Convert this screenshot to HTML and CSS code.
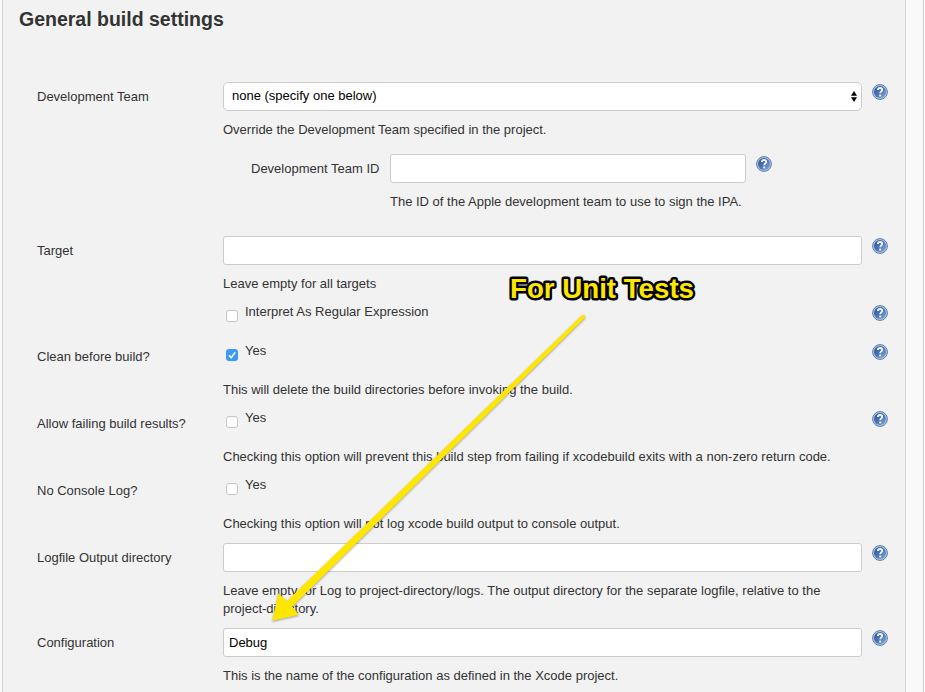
FILE: index.html
```html
<!DOCTYPE html>
<html lang="en">
<head>
<meta charset="utf-8">
<title>General build settings</title>
<link rel="stylesheet" href="styles.css">
</head>
<body>
<svg class="defs" aria-hidden="true">
  <defs>
    <linearGradient id="ball" x1="0" y1="0" x2="1" y2="1">
      <stop offset="0" stop-color="#2c5599"/><stop offset=".5" stop-color="#4a75b3"/><stop offset="1" stop-color="#86aada"/>
    </linearGradient>
    <symbol id="help" viewBox="0 0 16 16">
      <circle cx="8" cy="8" r="7.400" fill="#b4c7e0" stroke="#5a7db2"/>
      <circle cx="8" cy="8" r="6" fill="url(#ball)"/>
      <path d="M5.900 6.100C5.900 4.600 6.800 4 8.100 4s2.100.7 2.100 1.900c0 1.500-2 1.600-2 3.300" fill="none" stroke="#f0f4fa" stroke-width="1.800"/>
      <rect x="7.200" y="10.600" width="2" height="1.800" fill="#f0f4fa"/>
    </symbol>
  </defs>
</svg>
<main class="frame">
  <section class="panel">
    <h1 class="title">General build settings</h1>
    <div class="row team">
      <label class="label">Development Team</label>
      <div class="body">
        <div class="field select">none (specify one below)
          <svg class="arrows" viewBox="0 0 6 11"><path d="M0 4.700 3 0l3 4.700zM0 6.300h6L3 11z"/></svg>
        </div>
        <p class="hint">Override the Development Team specified in the project.</p>
      </div>
      <svg class="help"><use href="#help"/></svg>
    </div>
    <div class="row nested">
      <label class="label">Development Team ID</label>
      <div class="body">
        <div class="field"></div>
        <p class="hint">The ID of the Apple development team to use to sign the IPA.</p>
      </div>
      <svg class="help"><use href="#help"/></svg>
    </div>
    <div class="row">
      <label class="label">Target</label>
      <div class="body">
        <div class="field"></div>
        <p class="hint">Leave empty for all targets</p>
      </div>
      <svg class="help"><use href="#help"/></svg>
    </div>
    <div class="row short">
      <span class="label"></span>
      <div class="body">
        <div class="check"><span class="box"></span>Interpret As Regular Expression</div>
      </div>
      <svg class="help"><use href="#help"/></svg>
    </div>
    <div class="row">
      <label class="label">Clean before build?</label>
      <div class="body">
        <div class="check"><span class="box on"><svg viewBox="0 0 12 12"><path d="M3 6.300 5.200 8.700 9.200 3.200"/></svg></span>Yes</div>
        <p class="hint">This will delete the build directories before invoking the build.</p>
      </div>
      <svg class="help"><use href="#help"/></svg>
    </div>
    <div class="row">
      <label class="label">Allow failing build results?</label>
      <div class="body">
        <div class="check"><span class="box"></span>Yes</div>
        <p class="hint">Checking this option will prevent this build step from failing if xcodebuild exits with a non-zero return code.</p>
      </div>
      <svg class="help"><use href="#help"/></svg>
    </div>
    <div class="row">
      <label class="label">No Console Log?</label>
      <div class="body">
        <div class="check"><span class="box"></span>Yes</div>
        <p class="hint">Checking this option will not log xcode build output to console output.</p>
      </div>
    </div>
    <div class="row tall">
      <label class="label">Logfile Output directory</label>
      <div class="body">
        <div class="field"></div>
        <p class="hint">Leave empty for Log to project-directory/logs. The output directory for the separate logfile, relative to the project-directory.</p>
      </div>
      <svg class="help"><use href="#help"/></svg>
    </div>
    <div class="row">
      <label class="label">Configuration</label>
      <div class="body">
        <div class="field">Debug</div>
        <p class="hint">This is the name of the configuration as defined in the Xcode project.</p>
      </div>
      <svg class="help"><use href="#help"/></svg>
    </div>
  </section>
</main>
<svg class="annotation" viewBox="0 0 925 692">
  <path class="arrow" d="M582 315.200Q584.800 313.800 585.400 317.200L292.200 606.500 299 614.700 272.300 620.800 278.300 593.300 287 601Z"/>
  <text class="callout" x="510" y="298" textLength="184" lengthAdjust="spacingAndGlyphs">For Unit Tests</text>
</svg>
</body>
</html>
```

FILE: styles.css
```css
* { box-sizing: border-box; }
html, body { margin: 0; height: 692px; overflow: hidden; }
body {
  background: #fff;
  color: #333;
  font: 13px/18px "Liberation Sans", Arial, sans-serif;
}
.defs { position: absolute; width: 0; height: 0; }
.frame {
  width: 924px;
  height: 692px;
  padding-left: 2px;
  background: #f9f9f9;
  border-right: 1px solid #ccc;
}
.panel {
  width: 904px;
  height: 692px;
  padding: 6px 0 0 16px;
  overflow: hidden;
  background: #f2f2f2;
  border: solid #d4d4d4;
  border-width: 0 1px;
}
.title {
  height: 76px;
  margin: 0;
  font-size: 19.500px;
  line-height: 27px;
  white-space: nowrap;
}
.row {
  display: grid;
  grid-template-columns: 186px 639px 26px;
  height: 67px;
  padding-left: 18px;
  align-items: start;
}
.team { height: 72px; }
.nested {
  grid-template-columns: 139px 356px 26px;
  height: 82px;
  padding-left: 232px;
}
.short { height: 39px; }
.tall { height: 85px; }
.label { padding-top: 6px; white-space: nowrap; }
.help { width: 16px; height: 16px; margin: 2px 0 0 10px; }
.field {
  position: relative;
  height: 29px;
  padding: 5px;
  background: #fff;
  border: 1px solid #ccc;
  border-radius: 3px;
  color: #000;
}
.select { padding: 4px 8px; border-radius: 5px; }
.arrows { position: absolute; right: 4px; top: 8px; width: 6px; height: 11px; }
.hint { margin: 10px 0 0; }
.check { display: flex; gap: 7px; height: 29px; padding-left: 3px; }
.box {
  width: 12px;
  height: 12px;
  margin-top: 7px;
  background: #fff;
  border: 1px solid #c6c6c6;
  border-radius: 3px;
}
.on { background: #3b99fc; border: 0; }
.on svg { display: block; }
.on path { fill: none; stroke: #fff; stroke-width: 1.500; }
.annotation { position: absolute; left: 0; top: 0; width: 925px; height: 692px; }
.arrow { fill: #ffe600; filter: drop-shadow(0 1px 1px rgba(0, 0, 0, .35)); }
.callout {
  font-weight: bold;
  font-size: 28px;
  fill: #ffe600;
  stroke: #000;
  stroke-width: 5px;
  stroke-linejoin: round;
  paint-order: stroke;
}
```
